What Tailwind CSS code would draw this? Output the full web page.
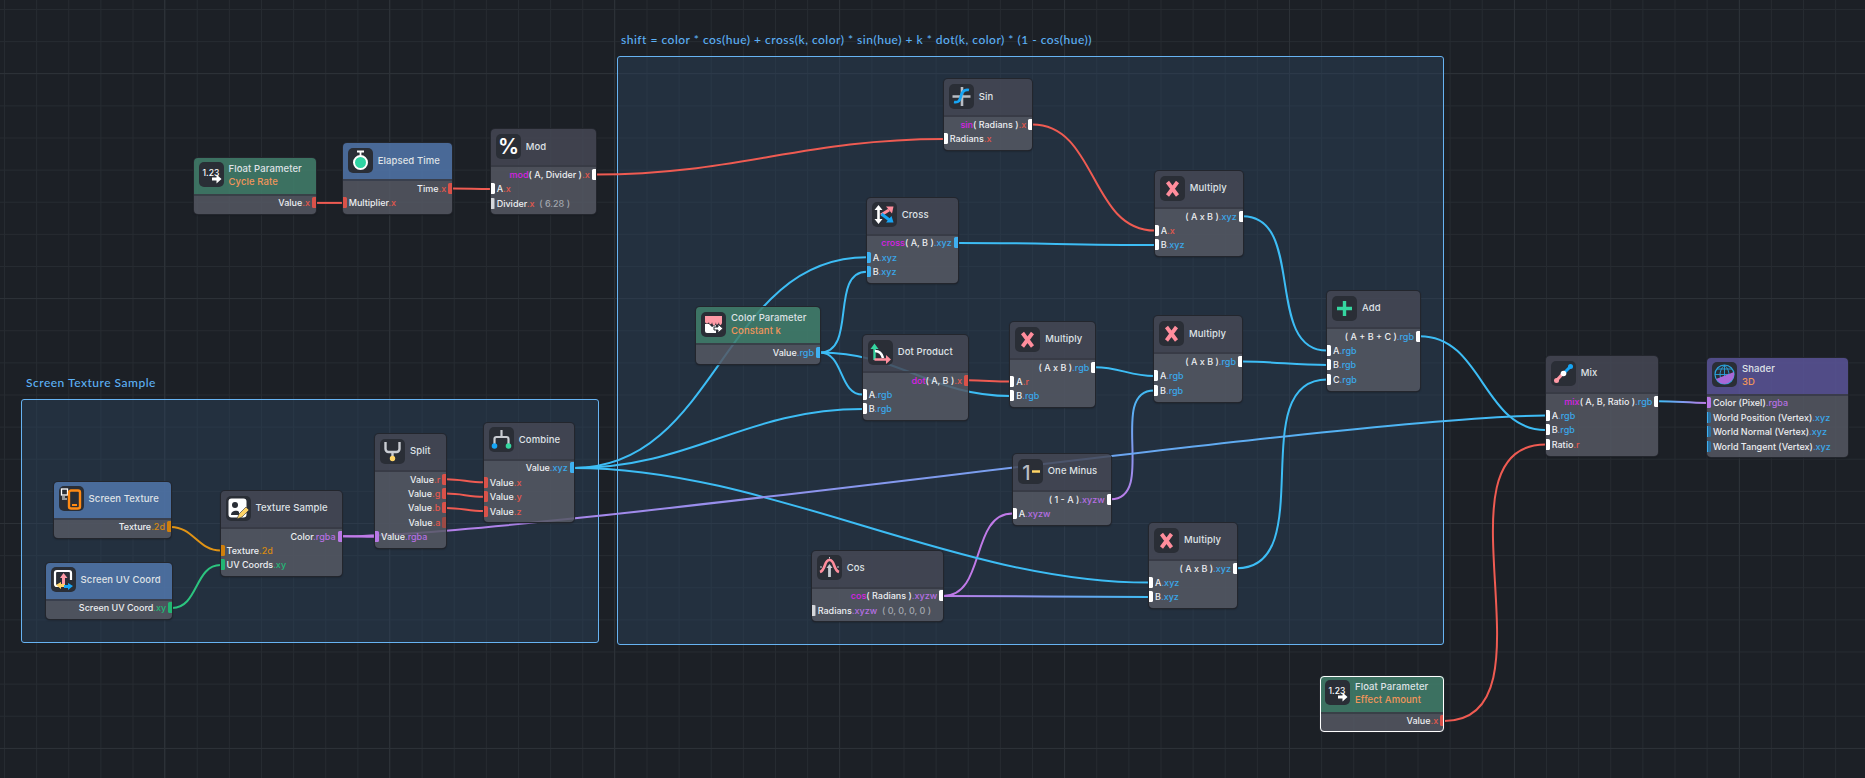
<!DOCTYPE html>
<html lang="en">
<head>
    <meta charset="UTF-8">
    <title>Shader Graph</title>
    <script src="https://cdn.jsdelivr.net/npm/@tailwindcss/browser@4"></script>
</head>
<body class="bg-[#1c2026] overflow-hidden">
    <div id="canvas" class="relative w-[1865px] h-[778px] overflow-hidden bg-[linear-gradient(to_right,#2c3137_1px,transparent_1px),linear-gradient(to_bottom,#2c3137_1px,transparent_1px),linear-gradient(to_right,#262b31_1px,transparent_1px),linear-gradient(to_bottom,#262b31_1px,transparent_1px)] bg-[size:225px_225px,225px_225px,32.14px_32.14px,32.14px_32.14px] bg-[position:164px_73px,164px_73px,4px_9px,4px_9px] font-['Inter',sans-serif]">

        <!-- Groups -->
        <div class="absolute left-[26px] top-[375px] text-[12px] leading-4 tracking-[0.5px] text-[#5cb0f5] font-['Lato',sans-serif] font-medium">Screen Texture Sample</div>
        <div class="absolute left-[20.5px] top-[399px] w-[578px] h-[244px] rounded-[3px] border border-[#67b3f2] bg-[#2c4560]/45"></div>

        <div class="absolute left-[621px] top-[32px] text-[12px] leading-4 tracking-[0.5px] text-[#5cb0f5] font-['Lato',sans-serif] font-medium">shift = color * cos(hue) + cross(k, color) * sin(hue) + k * dot(k, color) * (1 - cos(hue))</div>
        <div class="absolute left-[617px] top-[56px] w-[827px] h-[589px] rounded-[3px] border border-[#67b3f2] bg-[#2c4560]/45"></div>

        <!-- Wires -->
        <svg id="wires" class="absolute left-0 top-0" width="1865" height="778" fill="none"></svg>

        <!-- Nodes -->
        <div id="nodes"></div>
    </div>

    <script>
        const RED = '#ef5b52', BLUE = '#3dbdf5', PURPLE = '#c07ae8', ORANGE = '#e09315', GREEN = '#2cc47f';

        const swizzle = {
            red: 'text-[#e5584c]',
            blue: 'text-[#3aa8ea]',
            purple: 'text-[#b56fe2]',
            orange: 'text-[#d88a10]',
            green: 'text-[#25b877]'
        };
        const port = {
            white: 'bg-white',
            dim: 'bg-[#d5d7db] border-r border-[#8b8f98]',
            red: 'bg-[#d9524a]',
            dimRed: 'bg-[#9c4a45]',
            blue: 'bg-[#3fb0f0]',
            dimBlue: 'bg-[#2b6f9e] border-l border-[#3fb0f0]',
            purple: 'bg-[#b978e6]',
            orange: 'bg-[#cf7f0c]',
            green: 'bg-[#22b573]'
        };
        const GREEN_HEAD = 'bg-[#42806c]/85', BLUE_HEAD = 'bg-[#5177ab]/85', GRAY_HEAD = 'bg-[#454855]/85', PURPLE_HEAD = 'bg-[#5a5599]/85';

        const fn = name => `<span class="text-[#d91fe6]">${name}</span>`;
        const dflt = v => ` <span class="text-[#a2a6ad]">&nbsp;( ${v} )</span>`;

        const X_ICON = '<path d="M7.500 6l10 13.500M17.500 6l-10 13.500" stroke="#ff8d9c" stroke-width="3.800"/>';
        const FLOAT_ICON = '<text x="12" y="13.500" text-anchor="middle" font-size="8.500" fill="#fff">1.23</text><path d="M13 15.500h4.500v-3l5 4.500-5 4.500v-3H13z" fill="#fff"/>';

        const icons = {
            float: FLOAT_ICON,
            multiply: X_ICON,
            elapsed: '<path d="M9 3.500h7M12.500 3.500v4" stroke="#fff" stroke-width="1.800"/><circle cx="12.500" cy="14.500" r="6.500" fill="#2fd3a3" stroke="#fff" stroke-width="2"/>',
            mod: '<text x="12.500" y="20" text-anchor="middle" font-size="21" font-weight="600" fill="#fff">%</text>',
            sin: '<path d="M3.500 12.500h18M13 3v19" stroke="#b9bdc4" stroke-width="2.600"/><path d="M5 18c5 1 6-2 7-6s3-7 8-6" stroke="#16a5f5" stroke-width="2.800"/>',
            cross: '<path d="M6.500 6v13" stroke="#fff" stroke-width="2.600"/><path d="M2.500 8l4-5 4 5zM2.500 17l4 5 4-5z" fill="#fff"/><path d="M9 13l8-5" stroke="#ff8d9c" stroke-width="3"/><path d="M14 4.500h7.500l-1.500 7z" fill="#ff8d9c"/><path d="M9.500 12l8 6" stroke="#16a5f5" stroke-width="3"/><path d="M21.500 20.500h-7.500l5.500-6.500z" fill="#16a5f5"/>',
            color: '<path d="M4 4h17v7c-1 3-3 3-3-1-1 4-3 4-3 0-1 5-3 5-4 0 0 3-3 3-3 0-1 2-3 2-4 0z" fill="#ff9aa6"/><path d="M4 12h4l3 3 4-2v8H6a2 2 0 0 1-2-2z" fill="#fff"/><path d="M13 15h4v-3l5 4.500-5 4.500v-3h-4z" fill="#fff" stroke="#2a2e36"/>',
            dot: '<path d="M6.500 20V7" stroke="#35d6a0" stroke-width="2.400"/><path d="M2.500 9l4-5.500 4 5.500z" fill="#35d6a0"/><path d="M6.500 19.500h13" stroke="#ff8d9c" stroke-width="2.400"/><path d="M18 15l5 4.500-5 4.500z" fill="#ff8d9c"/><path d="M7 11c4 0 7 3 8 7" stroke="#fff" stroke-width="2.600"/>',
            add: '<path d="M12.500 5v15M5 12.500h15" stroke="#35d6a0" stroke-width="3.400"/>',
            mix: '<path d="M5.500 19.500l5.500-6" stroke="#ff9aa6" stroke-width="3"/><path d="M14 11l6-6" stroke="#16a5f5" stroke-width="3"/><circle cx="5.500" cy="19.500" r="2.500" fill="#ff9aa6"/><circle cx="19.500" cy="5.500" r="2.500" fill="#16a5f5"/><circle cx="12.500" cy="12.500" r="2.800" fill="#fff"/>',
            shader: '<circle cx="12.500" cy="12.500" r="9.500" stroke="#2aa3dc" stroke-width="1.200"/><path d="M3 12.500h19M5 7h15M5 18h15M12.500 3v19M12.500 3c-6 6-6 13 0 19M12.500 3c6 6 6 13 0 19" stroke="#2aa3dc" stroke-width=".9"/><path d="M4 17l18-7c1 6-3 11-9 12-4 0-7-2-9-5z" fill="#a868d8"/>',
            oneMinus: '<text x="8.500" y="20.500" text-anchor="middle" font-size="20" font-weight="500" fill="#b9bdc4">1</text><path d="M14 12.500h8" stroke="#ffd466" stroke-width="2.600"/>',
            cos: '<path d="M3 17c3-1 4-4 5-7s2-5 4.500-5 3.500 2 4.500 5 2 6 5 7" stroke="#ff8d9c" stroke-width="2.600"/><path d="M12.500 11v11" stroke="#c9ccd2" stroke-width="2.800"/><path d="M9.500 13l3-4 3 4z" fill="#c9ccd2"/><path d="M12.500 2v1.500M3 12h2M20 12h2" stroke="#c9ccd2"/>',
            split: '<path d="M5.500 3v7a3 3 0 0 0 3 3h8a3 3 0 0 0 3-3V3M12.500 13v6" stroke="#c9ccd2" stroke-width="2.400"/><circle cx="12.500" cy="19.500" r="2.700" fill="#ffd466"/>',
            combine: '<path d="M12.500 3v6M5.500 17v-5a2 2 0 0 1 2-2h10a2 2 0 0 1 2 2v5" stroke="#c9ccd2" stroke-width="2.200"/><circle cx="5.500" cy="19" r="2.800" fill="#16a5f5"/><circle cx="19.500" cy="19" r="2.800" fill="#35d6a0"/>',
            screenTex: '<rect x="2.500" y="3" width="6" height="6" stroke="#fff" stroke-width="1.300"/><path d="M3 13h5M3 11h3" stroke="#fff"/><rect x="10" y="4.500" width="11" height="18" rx="2" stroke="#ff8a14" stroke-width="2.400"/><path d="M13 19h5" stroke="#ff8a14" stroke-width="2"/>',
            screenUv: '<path d="M12 19H6a2 2 0 0 1-2-2V6a2 2 0 0 1 2-2h12a2 2 0 0 1 2 2v7" stroke="#fff" stroke-width="2.200"/><path d="M12.500 6l4 5h-2.500v6h-3v-6H9z" fill="#ff9aa6"/><path d="M4 19l5-3v2h4v3H9v2z" fill="#ffd466" transform="translate(1 -1)"/><path d="M22 19l-5-3v2h-4v3h4v2z" fill="#16a5f5"/>',
            texSample: '<rect x="3.500" y="3.500" width="16" height="17" rx="2" stroke="#fff" stroke-width="2" fill="#fff"/><circle cx="9" cy="9" r="3" fill="#2a2e36"/><path d="M5 19c0-5 7-5 8-3v3z" fill="#2a2e36"/><path d="M11 23l2-5 7-7 3 3-7 7z" fill="#ffd466" stroke="#2a2e36" stroke-width=".6"/>'
        };

        // rows: [side, label, suffix, suffix colour, port]
        const O = 'out', I = 'in';
        const nodes = {
            rate: { x: 193.5, y: 157.7, w: 122.5, head: GREEN_HEAD, icon: 'float', title: 'Float Parameter', sub: 'Cycle Rate', rows: [[O, 'Value', '.x', 'red', 'red']] },
            time: { x: 342.7, y: 143.3, w: 109.6, head: BLUE_HEAD, icon: 'elapsed', title: 'Elapsed Time', rows: [[O, 'Time', '.x', 'red', 'red'], [I, 'Multiplier', '.x', 'red', 'red']] },
            mod: { x: 490.7, y: 129.3, w: 105, head: GRAY_HEAD, icon: 'mod', title: 'Mod', rows: [[O, fn('mod') + '( A, Divider )', '.x', 'red', 'white'], [I, 'A', '.x', 'red', 'white'], [I, 'Divider', '.x', 'red', 'dim', dflt('6.28')]] },
            sin: { x: 943.7, y: 79.3, w: 88.6, head: GRAY_HEAD, icon: 'sin', title: 'Sin', rows: [[O, fn('sin') + '( Radians )', '.x', 'red', 'white'], [I, 'Radians', '.x', 'red', 'white']] },
            cross: { x: 866.7, y: 197.7, w: 91, head: GRAY_HEAD, icon: 'cross', title: 'Cross', rows: [[O, fn('cross') + '( A, B )', '.xyz', 'blue', 'blue'], [I, 'A', '.xyz', 'blue', 'blue'], [I, 'B', '.xyz', 'blue', 'blue']] },
            mulTop: { x: 1154.7, y: 171, w: 88, head: GRAY_HEAD, icon: 'multiply', title: 'Multiply', rows: [[O, '( A x B )', '.xyz', 'blue', 'white'], [I, 'A', '.x', 'red', 'white'], [I, 'B', '.xyz', 'blue', 'white']] },
            colorK: { x: 696, y: 307.3, w: 124, head: GREEN_HEAD, icon: 'color', title: 'Color Parameter', sub: 'Constant k', rows: [[O, 'Value', '.rgb', 'blue', 'blue']] },
            dot: { x: 862.7, y: 335, w: 105.3, head: GRAY_HEAD, icon: 'dot', title: 'Dot Product', rows: [[O, fn('dot') + '( A, B )', '.x', 'red', 'red'], [I, 'A', '.rgb', 'blue', 'white'], [I, 'B', '.rgb', 'blue', 'white']] },
            mulDot: { x: 1010.3, y: 322, w: 85, head: GRAY_HEAD, icon: 'multiply', title: 'Multiply', rows: [[O, '( A x B )', '.rgb', 'blue', 'white'], [I, 'A', '.r', 'red', 'white'], [I, 'B', '.rgb', 'blue', 'white']] },
            mulMid: { x: 1154, y: 316.4, w: 88, head: GRAY_HEAD, icon: 'multiply', title: 'Multiply', rows: [[O, '( A x B )', '.rgb', 'blue', 'white'], [I, 'A', '.rgb', 'blue', 'white'], [I, 'B', '.rgb', 'blue', 'white']] },
            add: { x: 1327, y: 291, w: 93, head: GRAY_HEAD, icon: 'add', title: 'Add', rows: [[O, '( A + B + C )', '.rgb', 'blue', 'white'], [I, 'A', '.rgb', 'blue', 'white'], [I, 'B', '.rgb', 'blue', 'white'], [I, 'C', '.rgb', 'blue', 'white']] },
            mix: { x: 1545.7, y: 356, w: 112.6, head: GRAY_HEAD, icon: 'mix', title: 'Mix', rows: [[O, fn('mix') + '( A, B, Ratio )', '.rgb', 'blue', 'white'], [I, 'A', '.rgb', 'blue', 'white'], [I, 'B', '.rgb', 'blue', 'white'], [I, 'Ratio', '.r', 'red', 'white']] },
            shader: { x: 1707, y: 357.7, w: 141, head: PURPLE_HEAD, icon: 'shader', title: 'Shader', sub: '3D', rows: [[I, 'Color (Pixel)', '.rgba', 'purple', 'purple'], [I, 'World Position (Vertex)', '.xyz', 'blue', 'dimBlue'], [I, 'World Normal (Vertex)', '.xyz', 'blue', 'dimBlue'], [I, 'World Tangent (Vertex)', '.xyz', 'blue', 'dimBlue']] },
            oneMinus: { x: 1012.7, y: 454, w: 98, head: GRAY_HEAD, icon: 'oneMinus', title: 'One Minus', rows: [[O, '( 1 - A )', '.xyzw', 'purple', 'white'], [I, 'A', '.xyzw', 'purple', 'white']] },
            mulBot: { x: 1149, y: 523, w: 88, head: GRAY_HEAD, icon: 'multiply', title: 'Multiply', rows: [[O, '( A x B )', '.xyz', 'blue', 'white'], [I, 'A', '.xyz', 'blue', 'white'], [I, 'B', '.xyz', 'blue', 'white']] },
            cos: { x: 811.7, y: 550.7, w: 131.6, head: GRAY_HEAD, icon: 'cos', title: 'Cos', rows: [[O, fn('cos') + '( Radians )', '.xyzw', 'purple', 'white'], [I, 'Radians', '.xyzw', 'purple', 'dim', dflt('0, 0, 0, 0')]] },
            effect: { x: 1320, y: 675.7, w: 124.3, head: GREEN_HEAD, icon: 'float', title: 'Float Parameter', sub: 'Effect Amount', selected: true, rows: [[O, 'Value', '.x', 'red', 'red']] },
            screenTex: { x: 53.6, y: 481.7, w: 117.4, head: BLUE_HEAD, icon: 'screenTex', title: 'Screen Texture', rows: [[O, 'Texture', '.2d', 'orange', 'orange']] },
            screenUv: { x: 45.6, y: 562.7, w: 126.7, head: BLUE_HEAD, icon: 'screenUv', title: 'Screen UV Coord', rows: [[O, 'Screen UV Coord', '.xy', 'green', 'green']] },
            texSample: { x: 220.5, y: 491, w: 121, head: GRAY_HEAD, icon: 'texSample', title: 'Texture Sample', rows: [[O, 'Color', '.rgba', 'purple', 'purple'], [I, 'Texture', '.2d', 'orange', 'orange'], [I, 'UV Coords', '.xy', 'green', 'green']] },
            split: { x: 375, y: 434, w: 71.3, head: GRAY_HEAD, icon: 'split', title: 'Split', rows: [[O, 'Value', '.r', 'red', 'red'], [O, 'Value', '.g', 'red', 'red'], [O, 'Value', '.b', 'red', 'red'], [O, 'Value', '.a', 'red', 'dimRed'], [I, 'Value', '.rgba', 'purple', 'purple']] },
            combine: { x: 483.8, y: 422.7, w: 90, head: GRAY_HEAD, icon: 'combine', title: 'Combine', rows: [[O, 'Value', '.xyz', 'blue', 'blue'], [I, 'Value', '.x', 'red', 'red'], [I, 'Value', '.y', 'red', 'red'], [I, 'Value', '.z', 'red', 'red']] }
        };

        // from node, row, to node, row, start colour, end colour
        const wires = [
            ['rate', 0, 'time', 1, RED],
            ['time', 0, 'mod', 1, RED],
            ['mod', 0, 'sin', 1, RED],
            ['sin', 0, 'mulTop', 1, RED],
            ['cross', 0, 'mulTop', 2, BLUE],
            ['mulTop', 0, 'add', 1, BLUE],
            ['combine', 0, 'cross', 1, BLUE],
            ['colorK', 0, 'cross', 2, BLUE],
            ['colorK', 0, 'dot', 1, BLUE],
            ['colorK', 0, 'mulDot', 2, BLUE],
            ['combine', 0, 'dot', 2, BLUE],
            ['dot', 0, 'mulDot', 1, RED],
            ['mulDot', 0, 'mulMid', 1, BLUE],
            ['mulMid', 0, 'add', 2, BLUE],
            ['oneMinus', 0, 'mulMid', 2, PURPLE, BLUE],
            ['cos', 0, 'oneMinus', 1, PURPLE],
            ['cos', 0, 'mulBot', 2, PURPLE, BLUE],
            ['combine', 0, 'mulBot', 1, BLUE],
            ['mulBot', 0, 'add', 3, BLUE],
            ['add', 0, 'mix', 2, BLUE],
            ['mix', 0, 'shader', 0, BLUE, PURPLE],
            ['effect', 0, 'mix', 3, RED],
            ['texSample', 0, 'mix', 1, PURPLE, BLUE],
            ['texSample', 0, 'split', 4, PURPLE],
            ['split', 0, 'combine', 1, RED],
            ['split', 1, 'combine', 2, RED],
            ['split', 2, 'combine', 3, RED],
            ['screenTex', 0, 'texSample', 1, ORANGE],
            ['screenUv', 0, 'texSample', 2, GREEN]
        ];

        const rowY = (n, i) => n.y + 38 + 14.4 * (i + 0.5);

        function renderWires() {
            let defs = '', paths = '';
            wires.forEach(([a, i, b, j, c1, c2], k) => {
                const x1 = nodes[a].x + nodes[a].w, y1 = rowY(nodes[a], i);
                const x2 = nodes[b].x, y2 = rowY(nodes[b], j);
                const d = Math.min(0.4 * Math.hypot(x2 - x1, y2 - y1), 195);
                let stroke = c1;
                if (c2) {
                    defs += `<linearGradient id="w${k}" gradientUnits="userSpaceOnUse" x1="${x1}" y1="${y1}" x2="${x2}" y2="${y2}"><stop offset="0" stop-color="${c1}"/><stop offset="1" stop-color="${c2}"/></linearGradient>`;
                    stroke = `url(#w${k})`;
                }
                paths += `<path d="M${x1} ${y1}C${x1 + d} ${y1} ${x2 - d} ${y2} ${x2} ${y2}" stroke="${stroke}" stroke-width="2"/>`;
            });
            document.getElementById('wires').innerHTML = `<defs>${defs}</defs>${paths}`;
        }

        function renderRow([side, label, suffix, color, portKind, extra]) {
            const text = `<span class="whitespace-nowrap">${label}<span class="${swizzle[color]}">${suffix}</span>${extra || ''}</span>`;
            const dot = side === O
                ? `<span class="w-1 h-[11px] shrink-0 rounded-l-[1.5px] ${port[portKind]}"></span>`
                : `<span class="w-1 h-[11px] shrink-0 rounded-r-[1.5px] ${port[portKind]}"></span>`;
            return side === O
                ? `<div class="flex items-center justify-end gap-[2px] h-[14.4px]">${text}${dot}</div>`
                : `<div class="flex items-center gap-[2px] h-[14.4px]">${dot}${text}</div>`;
        }

        function renderNode(n) {
            const title = n.sub
                ? `<div class="leading-[13px]"><div>${n.title}</div><div class="text-[#f2955a]">${n.sub}</div></div>`
                : `<div>${n.title}</div>`;
            const outline = n.selected ? 'outline outline-white -outline-offset-1 shadow-[0_0_0_1px_#23262d]' : 'shadow-[0_0_0_1px_#23262d,0_1px_2px_#15171b]';
            return `<div class="absolute ${outline} rounded-[4px] overflow-hidden text-[9px] font-medium leading-none text-[#eceef1]" style="left:${n.x}px;top:${n.y}px;width:${n.w}px">
                <div class="flex items-center gap-[5px] h-[38px] pl-[5px] pb-[2px] border-b-2 border-[#373b45]/90 ${n.head} text-[9.5px] tracking-[0.1px] font-medium text-[#dfe2e6]">
                    <div class="w-[25px] h-[25px] shrink-0 rounded-[5px] bg-[#2a2e36]"><svg width="25" height="25" viewBox="0 0 25 25" fill="none">${icons[n.icon]}</svg></div>
                    ${title}
                </div>
                <div class="pb-1 bg-[#555863]/85">${n.rows.map(renderRow).join('')}</div>
            </div>`;
        }

        renderWires();
        document.getElementById('nodes').innerHTML = Object.values(nodes).map(renderNode).join('');
    </script>
</body>
</html>
